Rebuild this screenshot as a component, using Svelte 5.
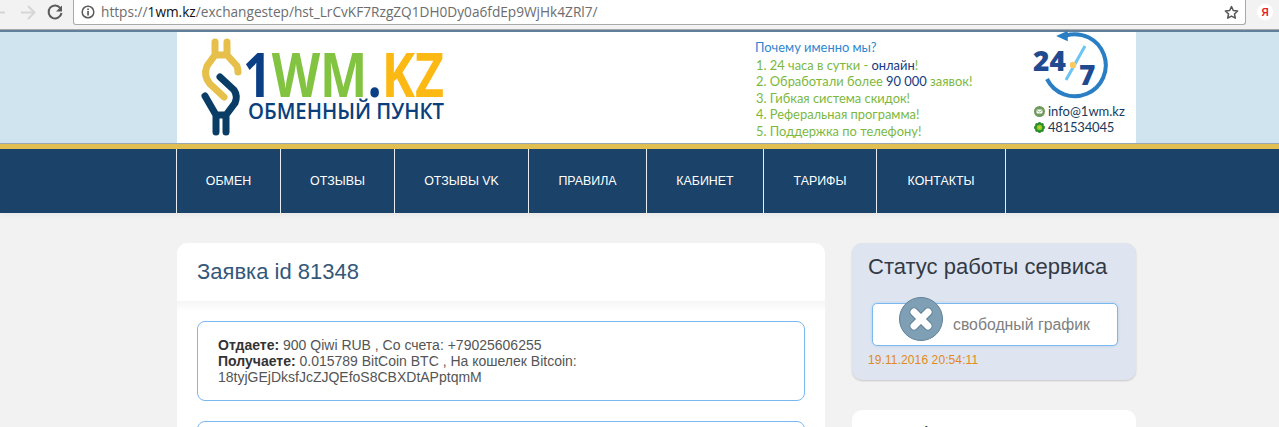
<script>
  const nav = [
    { label: 'ОБМЕН', width: 104 },
    { label: 'ОТЗЫВЫ', width: 114 },
    { label: 'ОТЗЫВЫ VK', width: 134 },
    { label: 'ПРАВИЛА', width: 118 },
    { label: 'КАБИНЕТ', width: 117 },
    { label: 'ТАРИФЫ', width: 113 },
    { label: 'КОНТАКТЫ', width: 130 }
  ];
</script>

<div class="page">
  <div class="chrome">
    <div class="nav-icons">
      <svg width="72" height="26" viewBox="0 0 72 26">
        <path d="M-8 12.500H5" class="arrow" />
        <path d="M21 12.500H34M28 6l6.500 6.500L28 19" class="arrow" />
        <path d="M60.500 8.300A6.500 6.500 0 1 0 61.500 13" class="reload" />
        <path d="M62 5.500V11.500H56Z" fill="#5a5a5a" />
      </svg>
    </div>
    <div class="omnibox">
      <svg class="info" width="14" height="14" viewBox="0 0 14 14">
        <circle cx="7" cy="7" r="5.800" fill="none" stroke="#5a5a5a" stroke-width="1.500" />
        <rect x="6.200" y="6" width="1.700" height="4.500" fill="#5a5a5a" />
        <rect x="6.200" y="3.500" width="1.700" height="1.600" fill="#5a5a5a" />
      </svg>
      <span class="url"><span class="dim">https://</span>1wm.kz<span class="dim">/exchangestep/hst_LrCvKF7RzgZQ1DH0Dy0a6fdEp9WjHk4ZRl7/</span></span>
      <svg class="star" width="15" height="15" viewBox="0 0 24 24">
        <path d="M12 2.500l2.900 6.300 6.900.8-5.100 4.700 1.400 6.800-6.100-3.400-6.100 3.400 1.400-6.800-5.100-4.700 6.900-.8z" fill="none" stroke="#555" stroke-width="2.400" stroke-linejoin="round" />
      </svg>
    </div>
    <div class="ya"><span>Я</span></div>
  </div>

  <header class="banner">
    <div class="banner-inner">
      <svg class="logo" width="280" height="111" viewBox="177 32 280 111">
        <g fill="none" stroke-width="7" stroke-linecap="round" stroke-linejoin="round">
          <path d="M215 42V55H227V42M215 55L207 66Q203 76 210 84L224 97M227 55L237 66Q238 70 238 72" stroke="#e6c04a" />
          <path d="M220 77L234 90Q238 96 235 103L226 115M205 96L216 115M216 115V132M226 115V132M216 115H226" stroke="#0a3d66" />
        </g>
        <text x="243" y="97" textLength="201" lengthAdjust="spacingAndGlyphs" class="big"><tspan fill="#0a3f86">1</tspan><tspan fill="#82c341">WM</tspan><tspan fill="#0a3f86">.</tspan><tspan fill="#fdb913">KZ</tspan></text>
        <text x="248" y="119" textLength="196" lengthAdjust="spacingAndGlyphs" class="sub">ОБМЕННЫЙ ПУНКТ</text>
      </svg>

      <div class="why">
        <div class="why-title">Почему именно мы?</div>
        <div class="why-line">1. 24 часа в сутки - <b>онлайн</b>!</div>
        <div class="why-line">2. Обработали более <b>90 000</b> заявок!</div>
        <div class="why-line">3. Гибкая система скидок!</div>
        <div class="why-line">4. Реферальная программа!</div>
        <div class="why-line">5. Поддержка по телефону!</div>
      </div>

      <div class="contacts">
        <svg class="clock" width="80" height="70" viewBox="1030 31 80 70">
          <path d="M1066 35.500A31 31 0 1 1 1047 79" fill="none" stroke="#2a7fc4" stroke-width="4" />
          <path d="M1058 36l9-4v8z" fill="#2a7fc4" stroke="#2a7fc4" stroke-width="1.500" />
          <path d="M1085 46L1066 80" stroke="#6cc4f0" stroke-width="3" />
          <circle cx="1073" cy="65" r="3.200" fill="#fcc860" />
          <text x="1033" y="71" class="clock-text">24</text>
          <text x="1079" y="85" class="clock-text">7</text>
        </svg>
        <div class="contact mail">
          <svg width="11" height="11" viewBox="0 0 11 11">
            <circle cx="5.500" cy="5.500" r="5.500" fill="#6f9a5c" />
            <rect x="2.500" y="3.500" width="6" height="4" rx="1" fill="#fff" />
            <path d="M2.500 4.200L5.500 6L8.500 4.200" fill="none" stroke="#6f9a5c" stroke-width=".7" />
          </svg>
          info@1wm.kz
        </div>
        <div class="contact">
          <svg width="11" height="11" viewBox="0 0 11 11">
            <circle cx="5.500" cy="1.900" r="1.900" fill="#2c8a2e" />
            <circle cx="5.500" cy="9.100" r="1.900" fill="#2c8a2e" />
            <circle cx="1.900" cy="5.500" r="1.900" fill="#2c8a2e" />
            <circle cx="9.100" cy="5.500" r="1.900" fill="#2c8a2e" />
            <circle cx="3" cy="3" r="1.900" fill="#2c8a2e" />
            <circle cx="8" cy="3" r="1.900" fill="#2c8a2e" />
            <circle cx="3" cy="8" r="1.900" fill="#2c8a2e" />
            <circle cx="8" cy="8" r="1.900" fill="#2c8a2e" />
            <circle cx="5.500" cy="5.500" r="2.800" fill="#7ed321" />
            <circle cx="5.500" cy="5.500" r="1.200" fill="#e8c02c" />
          </svg>
          <span class="num">481534045</span>
        </div>
      </div>
    </div>
  </header>

  <nav class="menu">
    <ul>
      {#each nav as item}
        <li style="width: {item.width}px">{item.label}</li>
      {/each}
    </ul>
  </nav>

  <main class="content">
    <section class="order">
      <h1>Заявка id 81348</h1>
      <div class="order-body">
        <div class="box">
          <b>Отдаете:</b> 900 Qiwi RUB , Со счета: +79025606255<br />
          <b>Получаете:</b> 0.015789 BitCoin BTC , На кошелек Bitcoin:<br />
          18tyjGEjDksfJcZJQEfoS8CBXDtAPptqmM
        </div>
        <div class="box"></div>
      </div>
    </section>

    <aside class="side">
      <section class="status">
        <h2>Статус работы сервиса</h2>
        <div class="pill">
          <span class="badge">
            <svg width="30" height="30" viewBox="0 0 30 30">
              <path d="M8 8L22 22M22 8L8 22" stroke="#5f8198" stroke-width="9" stroke-linecap="round" />
              <path d="M8 8L22 22M22 8L8 22" stroke="#fff" stroke-width="7" stroke-linecap="round" />
            </svg>
          </span>
          <span class="pill-text">свободный график</span>
        </div>
        <div class="stamp">19.11.2016 20:54:11</div>
      </section>
      <section class="next">
        <h2>Тарифы</h2>
      </section>
    </aside>
  </main>
</div>

<style>
  :global(body) {
    margin: 0;
    background: #f2f2f2;
  }
  .page {
    height: 427px;
    overflow: hidden;
    font-family: "Liberation Sans", Arial, sans-serif;
    background: #f2f2f2;
  }

  .chrome {
    height: 29px;
    display: flex;
    align-items: flex-start;
    background: #f2f2f2;
    border-bottom: 1px solid #a8a8a8;
  }
  .nav-icons {
    width: 73px;
    height: 26px;
    flex: none;
  }
  .arrow {
    fill: none;
    stroke: #d6d6d6;
    stroke-width: 2;
  }
  .reload {
    fill: none;
    stroke: #5a5a5a;
    stroke-width: 2;
  }
  .omnibox {
    flex: none;
    width: 1173px;
    height: 25px;
    box-sizing: border-box;
    display: flex;
    align-items: center;
    background: #fff;
    border: 1px solid #a9a9a9;
    border-top: 0;
    border-radius: 0 0 3px 3px;
    padding: 0 6px 1px 7px;
  }
  .info {
    flex: none;
  }
  .url {
    margin-left: 6px;
    font-family: "Open Sans", sans-serif;
    font-size: 13.660px;
    color: #111;
    white-space: nowrap;
    flex: 1;
  }
  .dim {
    color: #6d6d6d;
  }
  .star {
    flex: none;
    margin-top: 1px;
  }
  .ya {
    width: 16px;
    height: 16px;
    margin: 4px 0 0 11px;
    border-radius: 50%;
    background: #fff;
    display: flex;
    align-items: center;
    justify-content: center;
  }
  .ya span {
    color: #e8202a;
    font-size: 10px;
    font-weight: 700;
  }

  .banner {
    border-top: 2px solid #5f7f9c;
    border-bottom: 1px solid #9aa9b5;
    height: 111px;
    background: #d0e4f0;
  }
  .banner-inner {
    width: 959px;
    height: 111px;
    margin-left: 177px;
    background: #fff;
    display: flex;
  }
  .logo {
    flex: none;
    display: block;
  }
  .big {
    font-family: "Open Sans", sans-serif;
    font-weight: 700;
    font-size: 60px;
  }
  .sub {
    font-family: "Open Sans", sans-serif;
    font-weight: 600;
    font-size: 21px;
    fill: #0b3f7c;
  }
  .why {
    flex: none;
    width: 275px;
    margin-left: 298px;
    padding-top: 7px;
    font-family: Lato, sans-serif;
    font-size: 12.900px;
    white-space: nowrap;
  }
  .why-title {
    color: #2e86d0;
    height: 16.500px;
    line-height: 16.500px;
    margin-bottom: 1px;
  }
  .why-line {
    color: #7cb83e;
    height: 16.500px;
    line-height: 16.500px;
    padding-left: 1px;
  }
  .why-line b {
    font-weight: 400;
    color: #143a80;
  }
  .contacts {
    flex: none;
    width: 106px;
  }
  .clock {
    display: block;
    margin-top: -1px;
  }
  .clock-text {
    font-family: "Open Sans", sans-serif;
    font-weight: 800;
    font-size: 28px;
    fill: #1f4a90;
  }
  .contact {
    display: flex;
    align-items: center;
    gap: 3px;
    height: 16px;
    margin-left: 4px;
    font-family: Lato, sans-serif;
    font-size: 13px;
    color: #163c5e;
    white-space: nowrap;
  }
  .num {
    letter-spacing: -0.2px;
  }
  .mail {
    margin-top: 2px;
  }

  .menu {
    border-top: 5px solid #e0bf50;
    background: #1b4268;
    height: 64px;
    box-shadow: 0 2px 6px rgba(0, 0, 0, 0.05);
  }
  .menu ul {
    list-style: none;
    margin: 0 0 0 176px;
    padding: 0;
    display: flex;
    height: 64px;
  }
  .menu li {
    display: flex;
    align-items: center;
    justify-content: center;
    box-sizing: border-box;
    border-left: 1px solid #e8edf2;
    color: #fff;
    font-size: 12.400px;
  }
  .menu li:last-child {
    border-right: 1px solid #e8edf2;
  }

  .content {
    display: flex;
    align-items: flex-start;
    gap: 27px;
    margin: 30px 0 0 177px;
    width: 959px;
  }
  .order {
    width: 648px;
    flex: none;
    background: #fff;
    border-radius: 10px 10px 0 0;
  }
  h1 {
    margin: 0;
    height: 58px;
    line-height: 58px;
    padding-left: 20px;
    font-size: 22px;
    font-weight: 400;
    color: #34587a;
  }
  .order-body {
    padding: 20px;
    background: linear-gradient(#f5f5f5, #fff 10px);
  }
  .box {
    height: 80px;
    box-sizing: border-box;
    border: 1px solid #7ab8f0;
    border-radius: 8px;
    padding: 15px 20px;
    background: #fff;
    font-size: 14px;
    line-height: 16px;
    color: #555;
    margin-bottom: 20px;
  }
  .box b {
    color: #333;
  }

  .side {
    width: 284px;
    flex: none;
  }
  .status {
    height: 137px;
    box-sizing: border-box;
    background: #dee5f0;
    border-radius: 10px;
    padding: 12px 16px;
    box-shadow: 0 1px 2px rgba(0, 0, 0, 0.18);
  }
  h2 {
    margin: 0;
    font-size: 22px;
    font-weight: 400;
    line-height: 24px;
    color: #333a45;
  }
  .pill {
    height: 43px;
    box-sizing: border-box;
    margin: 24px 2px 0 4px;
    display: flex;
    align-items: center;
    background: #fff;
    border: 1px solid #7ab8f0;
    border-radius: 5px;
    position: relative;
    padding-left: 80px;
    box-shadow: 0 0 3px rgba(120, 170, 230, 0.4);
  }
  .badge {
    position: absolute;
    left: 26px;
    top: -7px;
    width: 44px;
    height: 44px;
    box-sizing: border-box;
    border-radius: 50%;
    background: #7f9fb5;
    border: 1px solid #5f8198;
    display: flex;
    align-items: center;
    justify-content: center;
  }
  .pill-text {
    font-size: 15.800px;
    color: #808080;
    white-space: nowrap;
  }
  .stamp {
    margin-top: 7px;
    font-size: 12px;
    line-height: 14px;
    color: #e08a20;
    letter-spacing: 0.1px;
  }
  .next {
    margin-top: 30px;
    background: #fff;
    border-radius: 10px;
    padding: 13px 16px;
    height: 100px;
  }
</style>
